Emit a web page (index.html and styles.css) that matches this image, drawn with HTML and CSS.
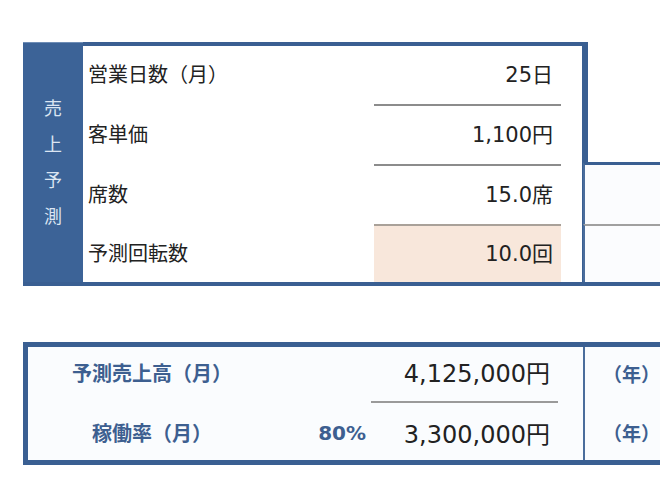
FILE: index.html
```html
<!DOCTYPE html>
<html lang="ja">
<head>
<meta charset="utf-8">
<link rel="stylesheet" href="styles.css">
</head>
<body>
<div class="page">
  <section class="forecast">
    <div class="side">
      <span>売</span><span>上</span><span>予</span><span>測</span>
    </div>
    <div class="main">
      <div class="row"><div class="label">営業日数（月）</div><div class="value">25日</div></div>
      <div class="row"><div class="label">客単価</div><div class="value">1,100円</div></div>
      <div class="row"><div class="label">席数</div><div class="value">15.0席</div></div>
      <div class="row last"><div class="label">予測回転数</div><div class="value hl">10.0回</div></div>
    </div>
    <div class="ext">
      <div class="ext-top"></div>
      <div class="ext-cell"></div>
      <div class="ext-cell last"></div>
    </div>
  </section>

  <section class="result">
    <div class="res-main">
      <div class="res-row">
        <div class="res-label">予測売上高（月）</div>
        <div class="res-pct"></div>
        <div class="res-value">4,125,000円</div>
      </div>
      <div class="res-row last">
        <div class="res-label">稼働率（月）</div>
        <div class="res-pct">80%</div>
        <div class="res-value">3,300,000円</div>
      </div>
    </div>
    <div class="res-ext">
      <div class="res-year">（年）</div>
      <div class="res-year">（年）</div>
    </div>
  </section>
</div>
</body>
</html>
```

FILE: styles.css
```css
html, body {
  margin: 0;
  padding: 0;
  background: #ffffff;
  overflow: hidden;
}
body {
  width: 660px;
  height: 500px;
  font-family: "Noto Sans CJK JP", sans-serif;
  color: #222;
}
.page {
  padding-top: 42px;
  padding-left: 23px;
}

/* ---------- top block ---------- */
.forecast {
  display: flex;
  width: 637px;
  border-bottom: 4px solid #3a5f92;
}
.side {
  width: 60px;
  flex: none;
  background: #3c6397;
  display: flex;
  flex-direction: column;
  align-items: center;
  justify-content: center;
  color: #dbe5f2;
  font-size: 18px;
  line-height: 36px;
  padding-bottom: 4px;
  border-top: 1px solid #6e8db6;
}
.main {
  width: 499px;
  flex: none;
  border-top: 4px solid #3a5f92;
  border-right: 6px solid #3a5f92;
  background: #fff;
}
.row {
  display: flex;
  height: 58px;
  border-bottom: 2px solid transparent;
}
.row.last { height: 56px; border-bottom: 0; }
.label {
  width: 291px;
  padding-left: 5px;
  box-sizing: border-box;
  font-size: 20px;
  display: flex;
  align-items: center;
  padding-bottom: 4px;
}
.value {
  width: 187px;
  box-sizing: border-box;
  padding-right: 8px;
  display: flex;
  align-items: center;
  justify-content: flex-end;
  font-family: "DejaVu Sans", "Noto Sans CJK JP", sans-serif;
  font-size: 21px;
  border-bottom: 2px solid #8c8c8c;
  margin-bottom: -2px;
  padding-bottom: 4px;
}
.row.last .value { border-bottom: 0; margin-bottom: 0; }
.value.hl {
  background: #f8e7db;
  border-top: 2px solid #a9a199;
  margin-top: -2px;
}
.ext {
  flex: 1;
  margin-left: -5px;
  display: flex;
  flex-direction: column;
}
.ext-top {
  height: 120px;
}
.ext-cell {
  height: 59px;
  border-top: 3px solid #3a5f92;
  border-left: 2px solid #4a6d9c;
  background: #fbfcfe;
}
.ext-cell + .ext-cell {
  border-top: 2px solid #a0a0a0;
  height: 56px;
}

/* ---------- result block ---------- */
.result {
  margin-top: 56px;
  display: flex;
  width: 637px;
  height: 113px;
  border: 5px solid #3a5f92;
  border-right: 0;
  background: #fafcfe;
}
.res-main {
  width: 555px;
  flex: none;
  display: flex;
  flex-direction: column;
}
.res-row {
  display: flex;
  height: 56px;
}
.res-row.last { height: 57px; }
.res-label {
  width: 248px;
  text-align: center;
  font-size: 20px;
  font-weight: bold;
  color: #3d5f90;
  display: flex;
  align-items: center;
  justify-content: center;
  padding-bottom: 6px;
  box-sizing: border-box;
}
.res-row.last .res-label { padding-bottom: 0; padding-top: 2px; }
.res-pct {
  width: 95px;
  display: flex;
  align-items: center;
  justify-content: flex-end;
  padding-right: 5px;
  box-sizing: border-box;
  font-family: "DejaVu Sans", sans-serif;
  font-weight: bold;
  font-size: 20px;
  color: #3d5f90;
  padding-top: 2px;
}
.res-value {
  width: 187px;
  box-sizing: border-box;
  padding-right: 8px;
  display: flex;
  align-items: center;
  justify-content: flex-end;
  font-family: "DejaVu Sans", "Noto Sans CJK JP", sans-serif;
  font-size: 24px;
  border-bottom: 2px solid #9a9a9a;
  padding-bottom: 6px;
}
.res-row.last .res-value { border-bottom: 0; padding-bottom: 0; padding-top: 2px; }
.res-ext {
  flex: 1;
  border-left: 2px solid #4a6d9c;
  display: flex;
  flex-direction: column;
}
.res-year {
  height: 56px;
  display: flex;
  align-items: center;
  padding-left: 18px;
  font-size: 19px;
  font-weight: bold;
  color: #3d5f90;
  padding-bottom: 4px;
  box-sizing: border-box;
  white-space: nowrap;
}
.res-year + .res-year { height: 57px; padding-bottom: 0; padding-top: 2px; }
```
